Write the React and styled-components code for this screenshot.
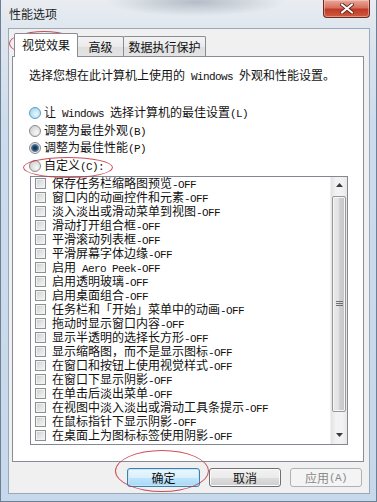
import React from 'react'
import styled, { createGlobalStyle, css } from 'styled-components'

const GlobalStyle = createGlobalStyle`
  html, body {
    margin: 0;
    padding: 0;
  }
  body {
    width: 377px;
    height: 502px;
    overflow: hidden;
    background: #dbe4ee;
    font-family: "Noto Sans CJK SC", "Noto Sans", sans-serif;
    font-size: 12px;
    color: #111;
  }
`

const options = [
  { label: '让 Windows 选择计算机的最佳设置(L)', tone: 'hover' },
  { label: '调整为最佳外观(B)' },
  { label: '调整为最佳性能(P)', checked: true },
  { label: '自定义(C):' }
]

const effects = [
  '保存任务栏缩略图预览-OFF',
  '窗口内的动画控件和元素-OFF',
  '淡入淡出或滑动菜单到视图-OFF',
  '滑动打开组合框-OFF',
  '平滑滚动列表框-OFF',
  '平滑屏幕字体边缘-OFF',
  '启用 Aero Peek-OFF',
  '启用透明玻璃-OFF',
  '启用桌面组合-OFF',
  '任务栏和「开始」菜单中的动画-OFF',
  '拖动时显示窗口内容-OFF',
  '显示半透明的选择长方形-OFF',
  '显示缩略图，而不是显示图标-OFF',
  '在窗口和按钮上使用视觉样式-OFF',
  '在窗口下显示阴影-OFF',
  '在单击后淡出菜单-OFF',
  '在视图中淡入淡出或滑动工具条提示-OFF',
  '在鼠标指针下显示阴影-OFF',
  '在桌面上为图标标签使用阴影-OFF'
]

// SimSun style: ascii runs are narrow fixed width
const Mixed = ({ text }) =>
  text.split(/([\x20-\x7e]+)/).map((part, i) =>
    /^[\x20-\x7e]+$/.test(part) ? <Latin key={i}>{part}</Latin> : part
  )

export default function App() {
  return (
    <>
      <GlobalStyle />
      <Window>
        <TitleBar>
          <Title>性能选项</Title>
          <CloseButton>
            <svg width='14' height='11' viewBox='0 0 14 11'>
              <path
                d='M2 1.5 L12 9.5 M12 1.5 L2 9.5'
                stroke='#5a1a14'
                strokeWidth='3.6'
                strokeLinecap='square'
              />
              <path
                d='M2 1.5 L12 9.5 M12 1.5 L2 9.5'
                stroke='#fff'
                strokeWidth='2'
                strokeLinecap='square'
              />
            </svg>
          </CloseButton>
        </TitleBar>

        <Client>
          <TabRow>
            <Tab $active $width={64}>视觉效果</Tab>
            <Tab $width={47}>高级</Tab>
            <Tab $width={83}>数据执行保护</Tab>
          </TabRow>

          <Panel>
            <Description>
              <Mixed text='选择您想在此计算机上使用的 Windows 外观和性能设置。' />
            </Description>

            <RadioGroup>
              {options.map((o) => (
                <RadioRow key={o.label}>
                  <Radio $checked={o.checked} $tone={o.tone} />
                  <span>
                    <Mixed text={o.label} />
                  </span>
                </RadioRow>
              ))}
            </RadioGroup>

            <ListBox>
              <Items>
                {effects.map((e) => (
                  <Item key={e}>
                    <Check />
                    <span>
                      <Mixed text={e} />
                    </span>
                  </Item>
                ))}
              </Items>
              <Scrollbar>
                <ScrollButton>
                  <svg width='7' height='4' viewBox='0 0 7 4'>
                    <path d='M0 4 L3.5 0 L7 4 Z' fill='#3a3a3a' />
                  </svg>
                </ScrollButton>
                <Thumb>
                  <svg width='7' height='6' viewBox='0 0 7 6'>
                    <path d='M0 0.5 H7 M0 2.5 H7 M0 4.5 H7' stroke='#6f6f6f' />
                  </svg>
                </Thumb>
                <Track />
                <ScrollButton>
                  <svg width='7' height='4' viewBox='0 0 7 4'>
                    <path d='M0 0 L3.5 4 L7 0 Z' fill='#3a3a3a' />
                  </svg>
                </ScrollButton>
              </Scrollbar>
            </ListBox>
          </Panel>

          <ButtonRow>
            <Button $primary $width={73}>确定</Button>
            <Button $width={72}>取消</Button>
            <Button $disabled $width={72}>
              <Mixed text='应用(A)' />
            </Button>
          </ButtonRow>
        </Client>

        <Annotation $x={8} $y={31} $w={70} $h={25} />
        <Annotation $x={22} $y={157} $w={90} $h={21} />
        <Annotation $x={114} $y={450} $w={94} $h={42} />
      </Window>
    </>
  )
}

const Window = styled.div`
  position: relative;
  width: 377px;
  height: 502px;
  box-sizing: border-box;
  display: flex;
  flex-direction: column;
  padding: 0 6px 7px 7px;
  border: 1px solid #6d7f95;
  border-top: none;
  background:
    radial-gradient(ellipse 90px 14px at 195px 2px, rgba(120, 130, 145, 0.45), transparent),
    linear-gradient(180deg, #e9edf2 0, #dfe6ee 28px, #cddcec 120px, #c6d8ea 100%);
`

const TitleBar = styled.div`
  display: flex;
  align-items: center;
  height: 28px;
  flex: none;
`

const Title = styled.span`
  font-size: 12px;
  color: #1d1d1d;
  line-height: 14px;
  margin-left: 1px;
`

const CloseButton = styled.div`
  align-self: flex-start;
  margin-left: auto;
  width: 47px;
  height: 18px;
  box-sizing: border-box;
  display: flex;
  align-items: center;
  justify-content: center;
  border: 1px solid #6b2a22;
  border-top: none;
  border-radius: 0 0 4px 4px;
  background: linear-gradient(180deg, #e9a99c 0, #d8705f 45%, #c03b26 55%, #cf5a3f 100%);
  box-shadow: inset 0 0 0 1px rgba(255, 220, 210, 0.45);
`

const Client = styled.div`
  flex: 1;
  display: flex;
  flex-direction: column;
  box-sizing: border-box;
  border: 1px solid #98a9bc;
  background: #f0f0f0;
  padding: 4px 5px 0 3px;
`

const TabRow = styled.div`
  position: relative;
  z-index: 1;
  display: flex;
  align-items: flex-end;
  height: 24px;
  margin-bottom: -1px;
  padding-left: 2px;
`

const Tab = styled.div`
  width: ${(p) => p.$width}px;
  box-sizing: border-box;
  display: flex;
  align-items: center;
  justify-content: center;
  border: 1px solid #898c95;
  border-bottom: none;
  border-radius: 2px 2px 0 0;
  line-height: 14px;
  ${(p) =>
    p.$active
      ? css`
          height: 24px;
          background: #fff;
          padding-bottom: 2px;
        `
      : css`
          height: 20px;
          margin-bottom: 1px;
          margin-left: -1px;
          background: linear-gradient(180deg, #f3f3f3 0, #ebebeb 50%, #dedede 51%, #e4e4e4 100%);
        `}
`

const Panel = styled.div`
  height: 406px;
  flex: none;
  box-sizing: border-box;
  background: #fff;
  border: 1px solid #898c95;
  padding: 11px 0 0 16px;
`

const Description = styled.div`
  line-height: 14px;
  height: 14px;
`

const Latin = styled.span`
  font-family: "Liberation Mono", "DejaVu Sans Mono", monospace;
  font-size: 11px;
  letter-spacing: -0.6px;
`

const RadioGroup = styled.div`
  margin-top: 22px;
  display: flex;
  flex-direction: column;
`

const RadioRow = styled.div`
  display: flex;
  align-items: center;
  gap: 3px;
  height: 17.7px;
  line-height: 14px;
`

const Radio = styled.span`
  width: 12px;
  height: 12px;
  box-sizing: border-box;
  border-radius: 50%;
  border: 1px solid #8b8b8b;
  background: radial-gradient(circle at 65% 65%, #f8f8f8 0, #dadada 60%, #c4c4c4 100%);
  ${(p) =>
    p.$tone === 'hover' &&
    css`
      border-color: #5e9ac4;
      background: radial-gradient(circle at 60% 60%, #eaf7fd 0, #b5def4 60%, #8cc6e6 100%);
    `}
  ${(p) =>
    p.$checked &&
    css`
      background: radial-gradient(circle, #0d2a45 0, #22486d 2px, #5a7c9c 3.5px, #e8e8e8 4.5px, #d4d4d4 100%);
    `}
`

const ListBox = styled.div`
  margin: 1px 0 0 1px;
  width: 318px;
  height: 269px;
  box-sizing: border-box;
  border: 1px solid #828790;
  display: flex;
`

const Items = styled.div`
  flex: 1;
  display: flex;
  flex-direction: column;
`

const Item = styled.div`
  height: 14px;
  display: flex;
  align-items: center;
  gap: 6px;
  padding-left: 4px;
  line-height: 14px;
  white-space: nowrap;
`

const Check = styled.span`
  width: 11px;
  height: 11px;
  flex: none;
  box-sizing: border-box;
  border: 1px solid #8e8f8f;
  background: linear-gradient(135deg, #c9ccd1 0, #e6e7e9 60%, #f5f5f5 100%);
  box-shadow: inset 0 0 0 1px #f2f2f2;
`

const Scrollbar = styled.div`
  width: 16px;
  flex: none;
  display: flex;
  flex-direction: column;
  background: linear-gradient(90deg, #e3e3e3 0, #f2f2f2 30%, #f2f2f2 70%, #e8e8e8 100%);
  border-left: 1px solid #f0f0f0;
`

const ScrollButton = styled.div`
  height: 17px;
  flex: none;
  display: flex;
  align-items: center;
  justify-content: center;
`

const Thumb = styled.div`
  height: 216px;
  margin: 2px 1px 0;
  box-sizing: border-box;
  border: 1px solid #979797;
  border-radius: 2px;
  display: flex;
  align-items: center;
  justify-content: center;
  background: linear-gradient(90deg, #e9e9e9 0, #e2e2e2 45%, #cfcfcf 55%, #c4c4c4 100%);
  box-shadow: inset 0 0 0 1px #f6f6f6;
`

const Track = styled.div`
  flex: 1;
`

const ButtonRow = styled.div`
  flex: 1;
  display: flex;
  align-items: center;
  justify-content: flex-end;
  gap: 9px;
  padding-right: 2px;
`

const Button = styled.div`
  width: ${(p) => p.$width}px;
  height: 19px;
  box-sizing: border-box;
  display: flex;
  align-items: center;
  justify-content: center;
  border: 1px solid #707070;
  border-radius: 3px;
  line-height: 14px;
  background: linear-gradient(180deg, #f2f2f2 0, #ebebeb 50%, #dddddd 51%, #cfcfcf 100%);
  box-shadow: inset 0 0 0 1px #fbfbfb;
  ${(p) =>
    p.$primary &&
    css`
      border-color: #3c7fb1;
      background: linear-gradient(180deg, #eaf6fd 0, #d9f0fc 50%, #bee6fd 51%, #a7d9f5 100%);
      box-shadow: inset 0 0 0 1px #c6e6f7;
    `}
  ${(p) =>
    p.$disabled &&
    css`
      border-color: #adb2b5;
      background: #f4f4f4;
      color: #8a8a8a;
      box-shadow: none;
    `}
`

const Annotation = styled.div`
  position: absolute;
  left: ${(p) => p.$x}px;
  top: ${(p) => p.$y}px;
  width: ${(p) => p.$w}px;
  height: ${(p) => p.$h}px;
  box-sizing: border-box;
  border: 1.3px solid rgba(196, 48, 60, 0.85);
  border-radius: 50%;
  pointer-events: none;
`
